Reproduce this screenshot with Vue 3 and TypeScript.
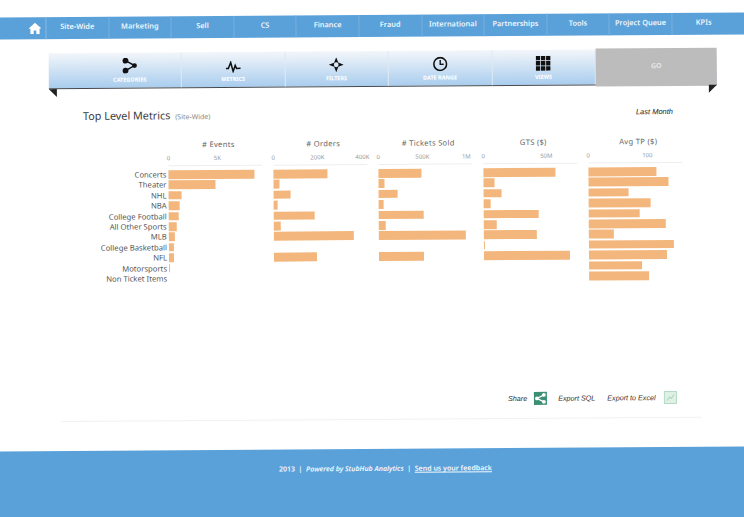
<template>
  <div class="page">
    <nav class="topnav">
      <a class="nav-home">
        <svg width="13" height="12" viewBox="0 0 13 12"><path d="M6.5 .5 0 6.4h1.9V12h3.3V8.2h2.6V12h3.3V6.4H13z" fill="#fff" /></svg>
      </a>
      <a v-for="item in navItems" :key="item" class="nav-item">{{ item }}</a>
    </nav>

    <div class="toolbar-wrap">
      <div class="toolbar">
        <div class="tool tool-first">
          <svg width="16" height="16" viewBox="0 0 16 16">
            <circle cx="3.8" cy="3" r="2.9" /><circle cx="3.8" cy="13" r="2.9" /><circle cx="12.8" cy="8" r="2.4" />
            <path d="M3.8 3 12.8 8 3.8 13" fill="none" stroke="#111" stroke-width="1.5" />
          </svg>
          <span>CATEGORIES</span>
        </div>
        <div class="tool">
          <svg width="15" height="12" viewBox="0 0 15 12"><path d="M0 7.5h2.6L5 1.5l2.4 9 2.1-6 1.3 3H15" fill="none" stroke="#111" stroke-width="1.5" /></svg>
          <span>METRICS</span>
        </div>
        <div class="tool">
          <svg width="15" height="15" viewBox="0 0 15 15"><path d="M7.5 0 9.6 5.4 15 7.5 9.6 9.6 7.5 15 5.4 9.6 0 7.5 5.4 5.4z" fill="#111" /><circle cx="7.5" cy="7.5" r="2.4" fill="#dbe9f6" /></svg>
          <span>FILTERS</span>
        </div>
        <div class="tool">
          <svg width="15" height="15" viewBox="0 0 15 15"><circle cx="7.5" cy="7.5" r="6.4" fill="none" stroke="#111" stroke-width="1.6" /><path d="M7.5 3.4v4.4h3.4" fill="none" stroke="#111" stroke-width="1.4" /></svg>
          <span>DATE RANGE</span>
        </div>
        <div class="tool">
          <svg width="15" height="15" viewBox="0 0 15 15" fill="#111">
            <template v-for="r in 3" :key="r">
              <rect v-for="c in 3" :key="c" :x="(c - 1) * 5.2" :y="(r - 1) * 5.2" width="4.4" height="4.4" />
            </template>
          </svg>
          <span>VIEWS</span>
        </div>
        <div class="tool-go">GO</div>
      </div>
      <div class="folds"><i class="fold-left"></i><i class="fold-right"></i></div>
    </div>

    <div class="heading">
      <h1>Top Level Metrics <small>(Site-Wide)</small></h1>
      <em>Last Month</em>
    </div>

    <div class="chart">
      <div class="labels">
        <div v-for="label in labels" :key="label">{{ label }}</div>
      </div>
      <div v-for="m in metrics" :key="m.title" class="metric">
        <div class="metric-title">{{ m.title }}</div>
        <div class="axis">
          <span v-for="t in m.ticks" :key="t.text" :style="{ left: t.at + 'px' }">{{ t.text }}</span>
        </div>
        <div class="bars">
          <div v-for="(v, i) in m.values" :key="i" class="row">
            <div class="bar" :style="{ width: v + 'px' }"></div>
          </div>
        </div>
      </div>
    </div>

    <div class="actions">
      <em>Share</em>
      <span class="share-box">
        <svg width="11" height="11" viewBox="0 0 11 11"><circle cx="9" cy="2" r="1.9" /><circle cx="2" cy="5.5" r="1.9" /><circle cx="9" cy="9" r="1.9" /><path d="M9 2 2 5.5 9 9" fill="none" stroke="#fff" stroke-width="1.2" /></svg>
      </span>
      <em class="sql">Export SQL</em>
      <em class="excel">Export to Excel</em>
      <span class="excel-box">
        <svg width="9" height="9" viewBox="0 0 9 9"><path d="M1 7.5 3.5 4l2 1.5L8 1.5" fill="none" stroke="#a9d8bd" stroke-width="1" /></svg>
      </span>
    </div>
    <div class="divider"></div>

    <footer class="footer">
      <p>2013 &nbsp;|&nbsp; <em>Powered by StubHub Analytics</em> &nbsp;|&nbsp; <u>Send us your feedback</u></p>
    </footer>
  </div>
</template>

<script setup lang="ts">
const navItems = ['Site-Wide', 'Marketing', 'Sell', 'CS', 'Finance', 'Fraud', 'International', 'Partnerships', 'Tools', 'Project Queue', 'KPIs']

const labels = ['Concerts', 'Theater', 'NHL', 'NBA', 'College Football', 'All Other Sports', 'MLB', 'College Basketball', 'NFL', 'Motorsports', 'Non Ticket Items']

const metrics = [
  { title: '# Events', ticks: [{ text: '0', at: 0 }, { text: '5K', at: 49 }], values: [86, 47, 13, 11, 10, 8, 6, 5, 5, 0.6, 0] },
  { title: '# Orders', ticks: [{ text: '0', at: 0 }, { text: '200K', at: 44 }, { text: '400K', at: 89 }], values: [54, 6, 17, 4, 41, 7, 80, 0, 43, 0, 0] },
  { title: '# Tickets Sold', ticks: [{ text: '0', at: 0 }, { text: '500K', at: 44 }, { text: '1M', at: 88 }], values: [43, 6, 19, 5, 45, 7, 87, 0, 45, 0, 0] },
  { title: 'GTS ($)', ticks: [{ text: '0', at: 0 }, { text: '50M', at: 63 }], values: [72, 11, 18, 7, 55, 13, 53, 1, 86, 0, 0] },
  { title: 'Avg TP ($)', ticks: [{ text: '0', at: 0 }, { text: '100', at: 59 }], values: [68, 80, 40, 62, 51, 77, 25, 85, 78, 53, 60] }
]
</script>

<style>
html, body { margin: 0; overflow: hidden; height: 517px; background: #fff; }
</style>

<style scoped>
.page {
  width: 744px;
  height: 517px;
  display: flex;
  flex-direction: column;
  font-family: "Noto Sans", "Liberation Sans", sans-serif;
  color: #444;
  transform: rotate(-0.38deg);
}
.topnav {
  display: flex;
  height: 22px;
  margin: 15px -8px 0;
  padding-left: 9px;
  background: #5aa0d9;
}
.nav-home { width: 47px; display: flex; align-items: center; justify-content: center; padding-left: 25px; box-sizing: border-box; border-right: 1px solid #85b8e3; }
.nav-item {
  width: 62.6px;
  box-sizing: border-box;
  text-align: center;
  font-size: 7.4px;
  font-weight: 600;
  line-height: 19px;
  color: #eef6fc;
  border-right: 1px solid #76afe0;
}
.nav-item:last-child { border-right: 0; }

.toolbar-wrap { margin: 14px 0 0 50px; width: 668px; }
.toolbar {
  display: flex;
  height: 35px;
  background: linear-gradient(#f3f6fa, #a9cdee);
  border-bottom: 1.5px solid #45494e;
}
.tool {
  width: 103.5px;
  box-sizing: border-box;
  display: flex;
  flex-direction: column;
  align-items: center;
  justify-content: flex-end;
  gap: 3px;
  padding-bottom: 5px;
  border-right: 1px solid #dfe9f3;
}
.tool-first { width: 133px; padding-left: 30px; }
.tool span { font-size: 5.5px; font-weight: 700; color: #fff; line-height: 6px; }
.tool svg { fill: #111; }
.tool-go {
  flex: 1;
  margin-top: -1px;
  margin-bottom: -1.5px;
  background: #bcbcbc;
  color: #e6e6e6;
  font-size: 7px;
  font-weight: 700;
  display: flex;
  align-items: center;
  justify-content: center;
  padding-bottom: 2px;
}
.folds { display: flex; justify-content: space-between; }
.fold-left { width: 0; height: 0; border-top: 8px solid #222; border-left: 8px solid transparent; }
.fold-right { width: 0; height: 0; border-top: 8px solid #222; border-left: 8px solid transparent; transform: scaleX(-1); }

.heading {
  display: flex;
  justify-content: space-between;
  align-items: flex-start;
  margin: 11px 70px 0 84px;
}
.heading h1 { margin: 0; font-size: 10.8px; font-weight: 400; line-height: 16px; color: #3a3a3a; }
.heading small { font-size: 7px; color: #888; margin-left: 2px; }
.heading em { font-size: 7.5px; color: #222; line-height: 16px; font-family: "Liberation Sans", sans-serif; }

.chart {
  display: flex;
  gap: 5px;
  margin: 14px 0 0 60px;
}
.labels {
  width: 107px;
  margin-right: -3px;
  padding-top: 30px;
  text-align: right;
  font-size: 7.7px;
  color: #555;
}
.labels div { height: 10.4px; line-height: 10.4px; white-space: nowrap; }
.metric { width: 100px; }
.metric-title { text-align: center; font-size: 7.6px; line-height: 11px; letter-spacing: .3px; color: #666; }
.axis {
  position: relative;
  height: 11px;
  margin-top: 4px;
  border-bottom: 1px solid #eee;
  margin-right: 6px;
}
.axis span { position: absolute; top: 0; transform: translateX(-50%); font-size: 6px; line-height: 8px; color: #999; white-space: nowrap; }
.bars { padding-top: 3.2px; }
.row { height: 10.4px; display: flex; align-items: center; }
.bar { height: 8.6px; background: #f3b77d; }

.actions {
  display: flex;
  align-items: center;
  margin: 110px 0 0 507px;
  height: 14px;
}
.actions em { font-size: 7.2px; color: #333; font-family: "Liberation Sans", sans-serif; white-space: nowrap; }
.share-box {
  width: 13px;
  height: 13px;
  margin-left: 7px;
  background: #3b8f73;
  display: flex;
  align-items: center;
  justify-content: center;
}
.share-box svg { fill: #fff; }
.sql { margin-left: 11px; }
.excel { margin-left: 12px; }
.excel-box {
  width: 13px;
  height: 13px;
  margin-left: 8px;
  background: #dff0e6;
  border: 1px solid #b4dcc4;
  box-sizing: border-box;
  display: flex;
  align-items: center;
  justify-content: center;
}
.divider { height: 1px; margin: 13px 44px 0 60px; background: #f1f1f1; }

.footer {
  margin: 29px -8px -20px;
  flex: 1;
  background: #5aa0d9;
  color: #f4f9fd;
  text-align: center;
  font-size: 7px;
}
.footer p { margin: 0; padding: 15px 0 0 24px; font-weight: 600; }
</style>
